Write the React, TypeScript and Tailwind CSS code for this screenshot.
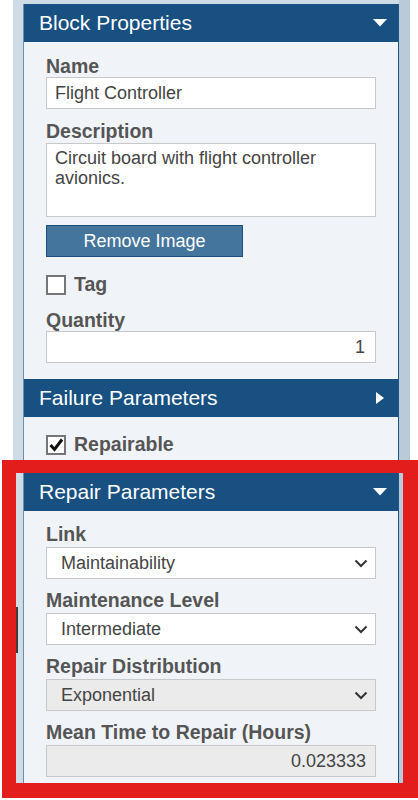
import React from 'react';

type FieldProps = {
  label: string;
  children: React.ReactNode;
  className?: string;
};

const labelCls = 'h-[22px] leading-[22px] text-[19.5px] font-bold text-[#555]';

const Field = ({ label, children, className }: FieldProps) => (
  <div className={'flex flex-col ' + (className ?? '')}>
    <div className={labelCls}>{label}</div>
    {children}
  </div>
);

const Chevron = () => (
  <svg width="14" height="9" viewBox="0 0 14 9" aria-hidden="true">
    <polyline points="1.5,1.5 7,7 12.5,1.5" fill="none" stroke="#333" strokeWidth="2" />
  </svg>
);

const Select = ({ value, disabled }: { value: string; disabled?: boolean }) => (
  <div
    className={
      'flex h-[32px] items-center justify-between border border-[#c8c8c8] pl-[14px] pr-[7px] text-[18px] text-[#444] ' +
      (disabled ? 'bg-[#ebebeb]' : 'bg-white')
    }
  >
    <span>{value}</span>
    <Chevron />
  </div>
);

const Header = ({ title, open }: { title: string; open: boolean }) => (
  <div className="flex h-[38px] items-center justify-between bg-[#175081] pl-[15px] text-[21px] text-white">
    <span>{title}</span>
    {open ? (
      <svg width="14" height="8" viewBox="0 0 14 8" className="mr-[11px]" aria-hidden="true">
        <polygon points="0,0 14,0 7,7.5" fill="#fff" />
      </svg>
    ) : (
      <svg width="8" height="12" viewBox="0 0 8 12" className="mr-[14px]" aria-hidden="true">
        <polygon points="0,0 8,6 0,12" fill="#fff" />
      </svg>
    )}
  </div>
);

const Checkbox = ({ label, checked }: { label: string; checked?: boolean }) => (
  <div className="flex h-[24px] items-center gap-[8px]">
    <div className="flex h-[20px] w-[20px] items-center justify-center border-2 border-[#767676] bg-white">
      {checked && (
        <svg width="16" height="16" viewBox="0 0 16 16" aria-hidden="true">
          <polyline points="2.5,8 6.5,12.5 14,2.5" fill="none" stroke="#111" strokeWidth="3" />
        </svg>
      )}
    </div>
    <span className="text-[19.5px] font-bold text-[#555]">{label}</span>
  </div>
);

const inputCls = 'flex h-[32px] items-center border border-[#c8c8c8] text-[18px] text-[#444]';

export default function App() {
  return (
    <div className="relative h-[800px] w-[418px] overflow-hidden bg-white font-['Liberation_Sans',Arial,sans-serif]">
      <div className="ml-[13px] flex h-[798px]">
        <div className="w-[386px] bg-[#cfdce6] pl-[10px] pt-[4px]">
          <div className="h-full w-[376px] border-l border-r border-l-[#6a8db2] border-r-[#1b5585] bg-[#f0f4f8]">
            <Header title="Block Properties" open />
            <div className="flex flex-col px-[22px] pb-[16px] pt-[13px]">
              <Field label="Name">
                <div className={inputCls + ' bg-white px-[8px]'}>Flight Controller</div>
              </Field>
              <Field label="Description" className="mt-[11px]">
                <div className="mt-[1px] h-[74px] border border-[#c8c8c8] bg-white px-[8px] pt-[4px] text-[18px] leading-[20px] text-[#444]">
                  Circuit board with flight controller avionics.
                </div>
              </Field>
              <button className="mt-[8px] h-[32px] w-[197px] border border-[#1b4f7e] bg-[#44759c] text-[18px] text-white">
                Remove Image
              </button>
              <div className="mt-[16px]">
                <Checkbox label="Tag" />
              </div>
              <Field label="Quantity" className="mt-[12px]">
                <div className={inputCls + ' justify-end bg-white pr-[10px]'}>1</div>
              </Field>
            </div>

            <Header title="Failure Parameters" open={false} />
            <div className="px-[22px] py-[16px]">
              <Checkbox label="Repairable" checked />
            </div>

            <Header title="Repair Parameters" open />
            <div className="flex flex-col px-[22px] pt-[12px]">
              <Field label="Link">
                <div className="mt-[2px]">
                  <Select value="Maintainability" />
                </div>
              </Field>
              <Field label="Maintenance Level" className="mt-[10px]">
                <div className="mt-[2px]">
                  <Select value="Intermediate" />
                </div>
              </Field>
              <Field label="Repair Distribution" className="mt-[10px]">
                <div className="mt-[2px]">
                  <Select value="Exponential" disabled />
                </div>
              </Field>
              <Field label="Mean Time to Repair (Hours)" className="mt-[10px]">
                <div className={inputCls + ' mt-[2px] justify-end bg-[#ebebeb] pr-[9px]'}>0.023333</div>
              </Field>
            </div>
          </div>
        </div>
        <div className="w-[11px] bg-[#b9cbdb]" />
      </div>

      <div className="absolute left-[16px] top-[607px] h-[46px] w-[2px] bg-[#3c3c3c]" />
      <div className="absolute left-[2px] top-[460px] h-[338px] w-[416px] border-b-[15px] border-l-[14px] border-r-[15px] border-t-[13px] border-[#e31c1c]" />
    </div>
  );
}
